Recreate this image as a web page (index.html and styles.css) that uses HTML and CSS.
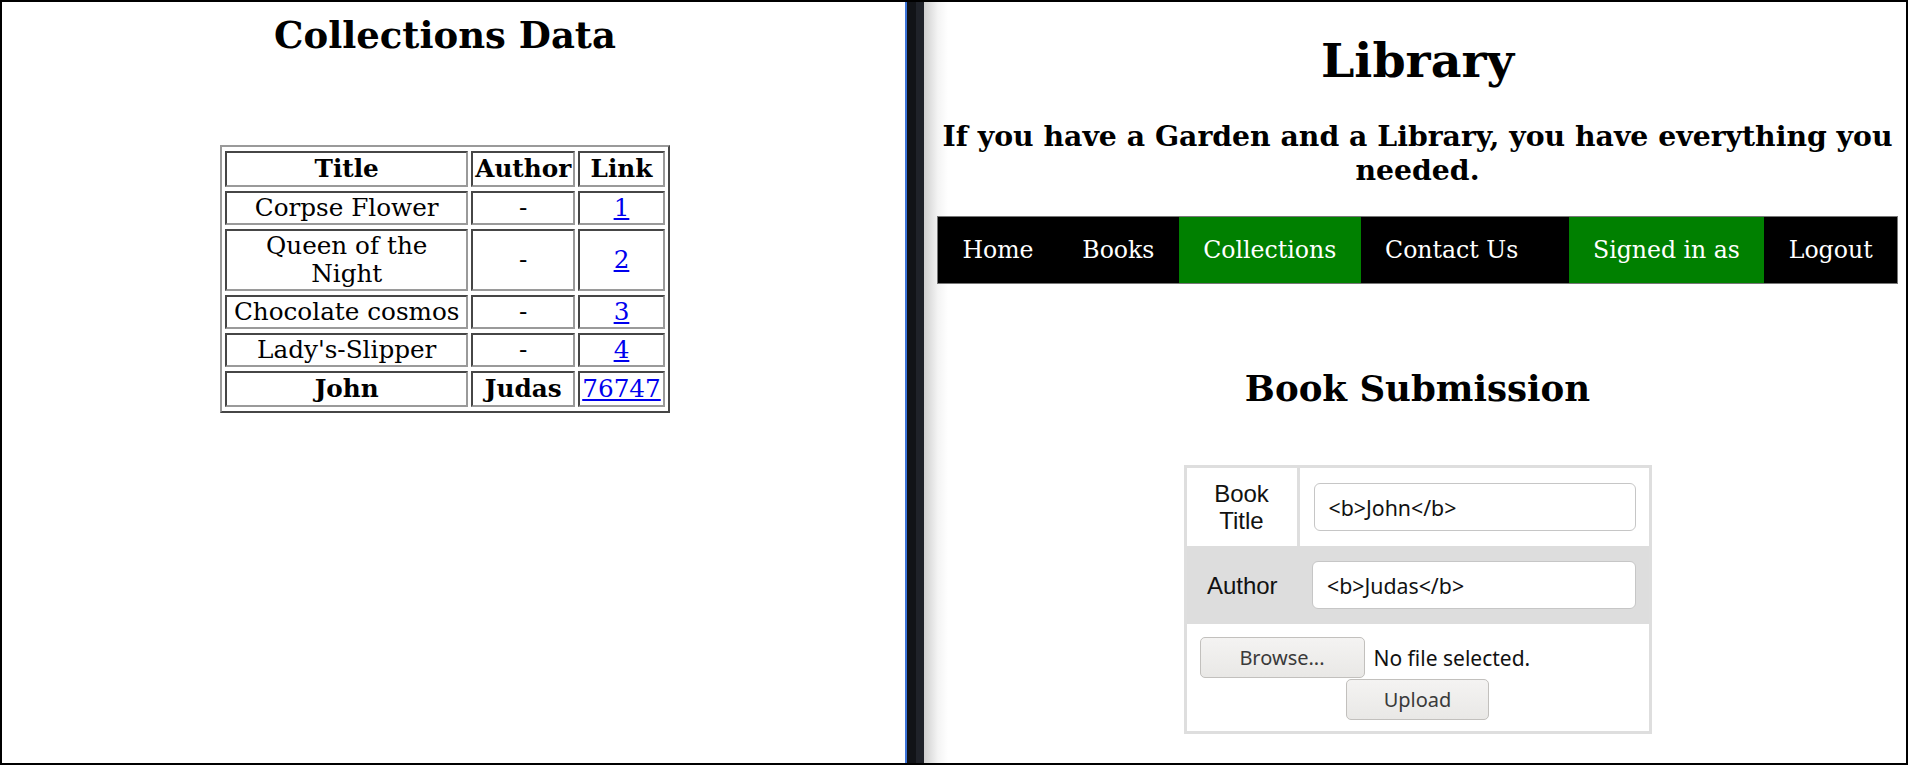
FILE: index.html
```html
<!DOCTYPE html>
<html lang="en">
<head>
<meta charset="utf-8">
<title>Library</title>
<link rel="stylesheet" href="styles.css">
</head>
<body>
<div class="frame">
  <section class="pane-left">
    <h2 class="coll-title">Collections Data</h2>
    <table class="coll-table">
      <tr><th class="c-title">Title</th><th class="c-author">Author</th><th class="c-link">Link</th></tr>
      <tr><td>Corpse Flower</td><td>-</td><td><a href="#">1</a></td></tr>
      <tr><td>Queen of the Night</td><td>-</td><td><a href="#">2</a></td></tr>
      <tr><td>Chocolate cosmos</td><td>-</td><td><a href="#">3</a></td></tr>
      <tr><td>Lady's-Slipper</td><td>-</td><td><a href="#">4</a></td></tr>
      <tr class="row-strong"><td><b>John</b></td><td><b>Judas</b></td><td><a href="#">76747</a></td></tr>
    </table>
  </section>
  <div class="divider"></div>
  <section class="pane-right">
    <h1 class="site-title">Library</h1>
    <h3 class="tagline">If you have a Garden and a Library, you have everything you needed.</h3>
    <nav class="nav">
      <ul class="nav-group">
        <li class="nav-item">Home</li>
        <li class="nav-item">Books</li>
        <li class="nav-item active">Collections</li>
        <li class="nav-item">Contact Us</li>
      </ul>
      <ul class="nav-group">
        <li class="nav-item active">Signed in as</li>
        <li class="nav-item">Logout</li>
      </ul>
    </nav>
    <h2 class="sub-title">Book Submission</h2>
    <table class="form-table">
      <colgroup><col class="col-label"><col></colgroup>
      <tr>
        <td class="f-label f-label-first">Book Title</td>
        <td class="f-field"><div class="text-input">&lt;b&gt;John&lt;/b&gt;</div></td>
      </tr>
      <tr class="shaded">
        <td class="f-label">Author</td>
        <td class="f-field"><div class="text-input">&lt;b&gt;Judas&lt;/b&gt;</div></td>
      </tr>
      <tr>
        <td class="f-upload" colspan="2">
          <div class="file-line"><span class="btn btn-browse">Browse...</span><span class="file-status">No file selected.</span></div>
          <div class="upload-line"><span class="btn btn-upload">Upload</span></div>
        </td>
      </tr>
    </table>
  </section>
</div>
</body>
</html>
```

FILE: styles.css
```css
html, body {
  margin: 0;
  padding: 0;
  background: #fff;
}
body {
  font-family: "DejaVu Serif", serif;
  color: #000;
}
.frame {
  box-sizing: border-box;
  width: 1908px;
  height: 765px;
  border: 2px solid #000;
  display: flex;
  overflow: hidden;
}
.pane-left {
  width: 903px;
  flex: none;
  box-sizing: border-box;
  padding-right: 17px;
}
.divider {
  width: 19px;
  flex: none;
  background: linear-gradient(to right, #3d74d9 0, #3d74d9 2px, #111317 2px, #111317 11px, #1f2229 11px, #1f2229 100%);
}
.pane-right {
  flex: 1;
  box-sizing: border-box;
  padding: 0 8px 0 13px;
  background: linear-gradient(to right, #cfcfcf 0, #f4f4f4 14px, #fff 24px);
}

/* left pane */
.coll-title {
  font-size: 37px;
  font-weight: bold;
  text-align: center;
  margin: 11px 0 0;
  line-height: normal;
}
.coll-table {
  margin: 88px auto 0;
  border: 2px outset #9a9a9a;
  border-spacing: 3px 4px;
  font-size: 24.7px;
}
.coll-table th, .coll-table td {
  border: 2px inset #9a9a9a;
  padding: 1px 2px;
  text-align: center;
  line-height: 28px;
}
.coll-table th, .coll-table .row-strong td { padding: 2px; }
.c-title { width: 235px; }
.c-author { width: 96px; }
.c-link { width: 77px; }
.coll-table a { color: #0000ee; text-decoration: underline; }

/* right pane */
.site-title {
  font-size: 47.5px;
  text-align: center;
  margin: 30px 0 0;
  line-height: normal;
}
.tagline {
  font-size: 28.3px;
  line-height: 34px;
  text-align: center;
  margin: 31px 0 0;
}
.nav {
  margin-top: 29px;
  display: flex;
  justify-content: space-between;
  background: #000;
  border: 1px solid #777;
}
.nav-group {
  display: flex;
  list-style: none;
  margin: 0;
  padding: 0;
}
.nav-item {
  padding: 19px 24.4px;
  font-size: 23.6px;
  line-height: 28px;
  color: #fff;
}
.nav-item.active { background: #008000; }
.sub-title {
  font-size: 35.6px;
  text-align: center;
  margin: 84px 0 0;
  line-height: normal;
}
.form-table {
  margin: 56px auto 0;
  width: 468px;
  table-layout: fixed;
  border-collapse: collapse;
  border: 3px solid #dedede;
  font-family: "Liberation Sans", Arial, sans-serif;
  font-size: 24px;
}
.col-label { width: 113px; }
.form-table td { padding: 0; }
.shaded { background: #dddddd; }
.form-table .f-label {
  text-align: center;
  padding: 0 8px;
  line-height: 27px;
  color: #111;
}
.f-label-first { border-right: 3px solid #dedede; }
.form-table .f-field { padding: 15px 13px 15px 14px; }
.text-input {
  box-sizing: border-box;
  height: 48px;
  border: 1px solid #c6c6c6;
  border-radius: 6px;
  background: #fff;
  padding: 0 14px;
  display: flex;
  align-items: center;
  font-family: "Noto Sans", sans-serif;
  font-size: 21.3px;
  color: #111;
}
.form-table .f-upload { padding: 13px 13px 11px; }
.file-line { display: flex; align-items: center; gap: 9px; }
.btn {
  box-sizing: border-box;
  display: inline-flex;
  align-items: center;
  justify-content: center;
  height: 41px;
  border: 1px solid #c2c0bd;
  border-radius: 5px;
  background: linear-gradient(#f4f3f2, #e9e8e6);
  font-family: "Noto Sans", sans-serif;
  font-size: 20px;
  color: #3a3a3a;
}
.btn-browse { width: 165px; }
.btn-upload { width: 143px; }
.file-status { font-family: "Noto Sans", sans-serif; font-size: 21px; color: #111; }
.upload-line { text-align: center; margin-top: 1px; line-height: 0; }
```
